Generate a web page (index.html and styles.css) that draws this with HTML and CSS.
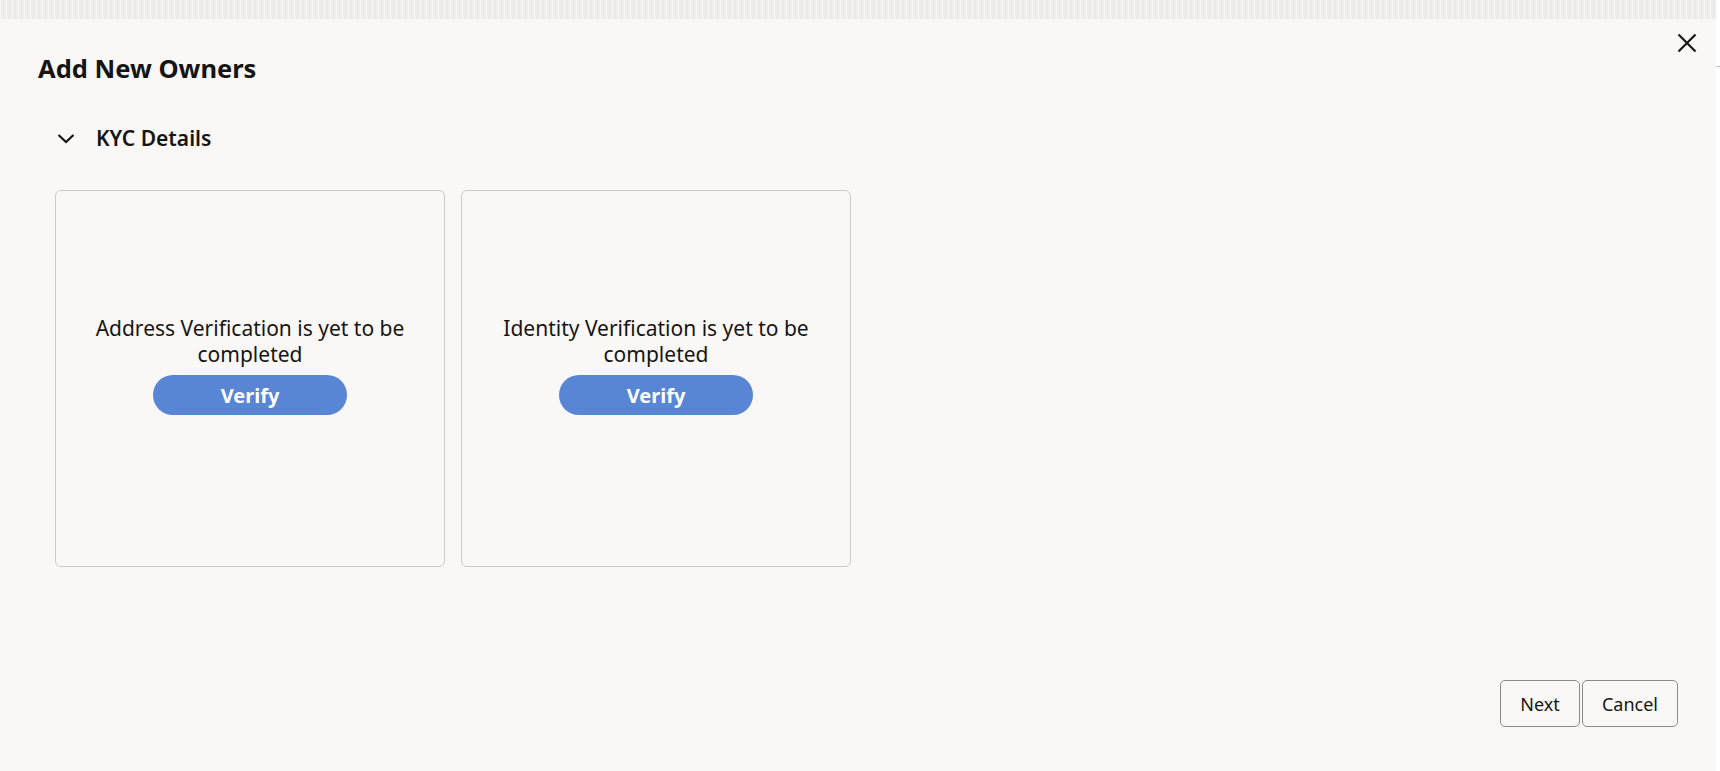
FILE: index.html
```html
<!DOCTYPE html>
<html lang="en">

<head>
  <meta charset="UTF-8">
  <meta name="viewport" content="width=device-width, initial-scale=1.0">

  <title>Add New Owners</title>
  <link rel="stylesheet" href="styles.css">
</head>

<body>
  <div class="page">
    <div class="main">
      <div class="band"></div>

      <div class="dialog">
        <button type="button" class="close-button" title="Close">
          <svg width="24" height="24" viewBox="0 0 24 24">
            <path d="M3.5 3.5 L20.5 20.5 M20.5 3.5 L3.5 20.5" stroke="#161513" stroke-width="2.2" fill="none"/>
          </svg>
        </button>

        <h1 class="dialog-title">Add New Owners</h1>

        <div class="section-header">
          <svg class="chevron" width="24" height="24" viewBox="0 0 24 24">
            <path d="M4.5 9 L12 16 L19.5 9" stroke="#161513" stroke-width="2.2" fill="none"/>
          </svg>
          <span class="section-title">KYC Details</span>
        </div>

        <div class="cards">
          <div class="card">
            <p class="card-text">Address Verification is yet to be completed</p>
            <button type="button" class="verify-button">Verify</button>
          </div>
          <div class="card">
            <p class="card-text">Identity Verification is yet to be completed</p>
            <button type="button" class="verify-button">Verify</button>
          </div>
        </div>

        <div class="footer">
          <button type="button" class="footer-button next">Next</button>
          <button type="button" class="footer-button cancel">Cancel</button>
        </div>
      </div>
    </div>

    <div class="side">
      <div class="side-line"></div>
    </div>
  </div>
</body>
</html>
```

FILE: styles.css
```css
/* Add owners dialog */

body {
  margin: 0;
  background-color: #ffffff;
  font-family: "Noto Sans", "Open Sans", sans-serif;
  color: #161513;
}

.page {
  display: flex;
  height: 771px;
  overflow: hidden;
}

.main {
  width: 1716px;
  display: flex;
  flex-direction: column;
}

.band {
  height: 19px;
  background-color: #efeeec;
  background-image:
    repeating-linear-gradient(90deg, rgba(255, 255, 255, 0.5) 0 1px, transparent 1px 3px, rgba(225, 224, 222, 0.5) 3px 4px, transparent 4px 6px);
}

.dialog {
  position: relative;
  flex: 1;
  display: flex;
  flex-direction: column;
  background-color: #f9f8f6;
}

.close-button {
  position: absolute;
  top: 12px;
  right: 17px;
  width: 24px;
  height: 24px;
  padding: 0;
  border: none;
  background: none;
  cursor: pointer;
}

.close-button svg {
  display: block;
}

.dialog-title {
  margin: 31px 0 0 38px;
  font-size: 25.5px;
  line-height: 36px;
  font-weight: 700;
}

.section-header {
  display: flex;
  align-items: center;
  gap: 18px;
  margin: 38px 0 0 54px;
  height: 28px;
}

.chevron {
  display: block;
}

.section-title {
  font-size: 21px;
  line-height: 28px;
  font-weight: 600;
}

.cards {
  display: flex;
  gap: 16px;
  margin: 38px 0 0 55px;
}

.card {
  width: 390px;
  height: 377px;
  box-sizing: border-box;
  border: 1px solid #cbcac8;
  border-radius: 6px;
  display: flex;
  flex-direction: column;
  align-items: center;
  justify-content: center;
  padding: 0 30px 27px;
}

.card-text {
  margin: 0;
  font-size: 21px;
  line-height: 26px;
  text-align: center;
}

.verify-button {
  margin-top: 8px;
  width: 194px;
  height: 40px;
  border: none;
  border-radius: 20px;
  background-color: #5886d4;
  color: #ffffff;
  font-family: inherit;
  font-size: 20px;
  font-weight: 700;
  cursor: pointer;
}

.footer {
  margin-top: auto;
  display: flex;
  justify-content: flex-end;
  gap: 2px;
  padding: 0 38px 44px 0;
}

.footer-button {
  height: 47px;
  border: 1px solid #8c8b89;
  border-radius: 5px;
  background-color: #f9f8f6;
  color: #161513;
  font-family: inherit;
  font-size: 18px;
  cursor: pointer;
}

.next {
  width: 80px;
}

.cancel {
  width: 96px;
}

.side {
  flex: 1;
  padding-top: 66px;
}

.side-line {
  height: 1px;
  background-color: #c8c8c8;
}
```
